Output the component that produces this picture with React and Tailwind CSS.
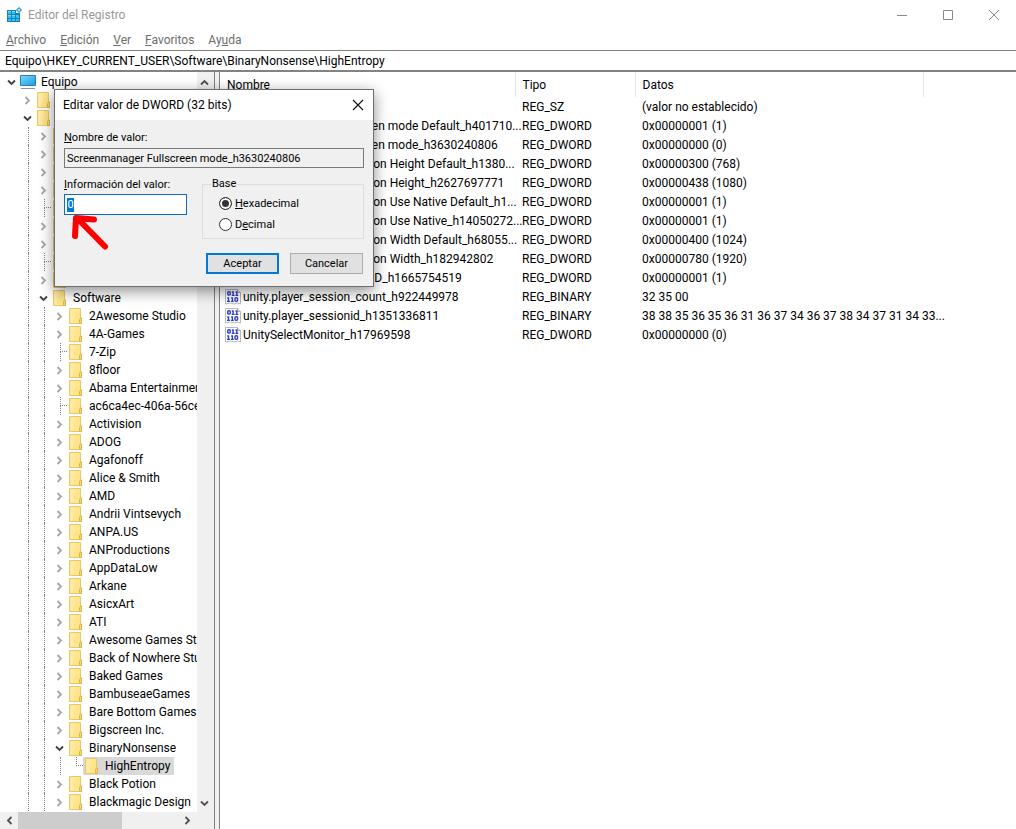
import { useState } from "react";

const uiFont = "font-['Roboto','Open_Sans',sans-serif]";

const menus = [
  ["", "A", "rchivo"],
  ["", "E", "dición"],
  ["", "V", "er"],
  ["", "F", "avoritos"],
  ["Ay", "u", "da"],
];

// Keys between HKEY_CURRENT_USER and Software
const userKeys = [
  { name: "AppEvents" },
  { name: "Console" },
  { name: "Control Panel" },
  { name: "EUDC" },
  { name: "Environment", leaf: true },
  { name: "Keyboard Layout" },
  { name: "Microsoft" },
  { name: "Network", leaf: true },
  { name: "Printers" },
];

const softwareKeys = [
  { name: "2Awesome Studio" },
  { name: "4A-Games" },
  { name: "7-Zip", leaf: true },
  { name: "8floor" },
  { name: "Abama Entertainment" },
  { name: "ac6ca4ec-406a-56ce", leaf: true },
  { name: "Activision" },
  { name: "ADOG" },
  { name: "Agafonoff" },
  { name: "Alice & Smith" },
  { name: "AMD" },
  { name: "Andrii Vintsevych" },
  { name: "ANPA.US" },
  { name: "ANProductions" },
  { name: "AppDataLow" },
  { name: "Arkane" },
  { name: "AsicxArt" },
  { name: "ATI" },
  { name: "Awesome Games Studio" },
  { name: "Back of Nowhere Studio" },
  { name: "Baked Games" },
  { name: "BambuseaeGames" },
  { name: "Bare Bottom Games" },
  { name: "Bigscreen Inc." },
  { name: "BinaryNonsense", open: true },
];

const tree = [
  { name: "Equipo", level: 0, open: true },
  { name: "HKEY_CLASSES_ROOT", level: 1 },
  { name: "HKEY_CURRENT_USER", level: 1, open: true },
  ...userKeys.map((k) => ({ ...k, level: 2 })),
  { name: "Software", level: 2, open: true },
  ...softwareKeys.map((k) => ({ ...k, level: 3 })),
  { name: "HighEntropy", level: 4, leaf: true, last: true },
  { name: "Black Potion", level: 3 },
  { name: "Blackmagic Design", level: 3 },
];

const values = [
  ["(Predeterminado)", "REG_SZ", "(valor no establecido)"],
  ["Screenmanager Fullscreen mode Default_h401710...", "REG_DWORD", "0x00000001 (1)"],
  ["Screenmanager Fullscreen mode_h3630240806", "REG_DWORD", "0x00000000 (0)"],
  ["Screenmanager Resolution Height Default_h1380...", "REG_DWORD", "0x00000300 (768)"],
  ["Screenmanager Resolution Height_h2627697771", "REG_DWORD", "0x00000438 (1080)"],
  ["Screenmanager Resolution Use Native Default_h1...", "REG_DWORD", "0x00000001 (1)"],
  ["Screenmanager Resolution Use Native_h14050272...", "REG_DWORD", "0x00000001 (1)"],
  ["Screenmanager Resolution Width Default_h68055...", "REG_DWORD", "0x00000400 (1024)"],
  ["Screenmanager Resolution Width_h182942802", "REG_DWORD", "0x00000780 (1920)"],
  ["Screenmanager Stereo 3D_h1665754519", "REG_DWORD", "0x00000001 (1)"],
  ["unity.player_session_count_h922449978", "REG_BINARY", "32 35 00"],
  ["unity.player_sessionid_h1351336811", "REG_BINARY", "38 38 35 36 35 36 31 36 37 34 36 37 38 34 37 31 34 33..."],
  ["UnitySelectMonitor_h17969598", "REG_DWORD", "0x00000000 (0)"],
];

const chevrons = {
  up: "M1 6.5 L4.5 3 L8 6.5",
  down: "M1 2.5 L4.5 6 L8 2.5",
  left: "M6.5 1 L3 4.5 L6.5 8",
  right: "M2.5 1 L6 4.5 L2.5 8",
};

const Chevron = ({ dir, className }) => (
  <svg viewBox="0 0 9 9" className={`w-[9px] h-[9px] shrink-0 ${className}`} fill="none" stroke="currentColor" strokeWidth="1.8">
    <path d={chevrons[dir]} />
  </svg>
);

const RegistryIcon = () => (
  <svg viewBox="0 0 16 16" className="w-4 h-4 shrink-0">
    <path d="M1 3h9v3h4v9H1z" fill="#1583b8" />
    <path d="M2 4h3v3H2zM6 4h3v3H6zM2 8h3v3H2zM6 8h3v3H6zM10 8h3v3h-3zM2 12h3v2H2zM6 12h3v2H6zM10 12h3v2h-3z" fill="#35c0f0" />
    <path d="M2 4h3v1H2zM6 4h3v1H6zM2 8h3v1H2zM6 8h3v1H6z" fill="#7adcf9" />
    <path d="M13 0.5 L15.5 3 L13 5.5 L10.5 3z" fill="#5fd0f5" stroke="#17759f" strokeWidth="0.9" />
    <path d="M12.3 3h1.4" stroke="#fff" />
  </svg>
);

const ComputerIcon = () => (
  <svg viewBox="0 0 16 16" className="w-4 h-4 shrink-0">
    <defs>
      <linearGradient id="screen" x1="0" y1="0" x2="1" y2="1">
        <stop offset="0" stopColor="#7fdcff" />
        <stop offset="1" stopColor="#149be0" />
      </linearGradient>
    </defs>
    <path d="M0.5 1.5h15v10H0.5z" fill="url(#screen)" stroke="#2f7fae" />
    <path d="M1 14.5h14" stroke="#7d99aa" />
  </svg>
);

const FolderIcon = () => (
  <svg viewBox="-1 0 16 16" className="w-4 h-4 shrink-0">
    <path d="M0.5 0.5h11v10h1v5h-12z" fill="#ffe48a" stroke="#e8c766" />
    <path d="M1 1h6L4 15H1z" fill="#ffeeb0" opacity="0.6" />
    <path d="M10.500 15.500v-4l1-1.500h1v5.500z" fill="#f7d673" stroke="#dfb54a" />
  </svg>
);

const BinaryIcon = () => (
  <svg viewBox="0 0 16 16" className="w-4 h-4 shrink-0">
    <path d="M0.5 0.5h12l3 3v11.500l-3-1-3 1-4-1-5 1z" fill="#fff" stroke="#b3b7be" />
    <path d="M12.5 0.5v3h3" fill="#e4e6ea" stroke="#a9adb5" />
    <g fill="none" stroke="#2f3fc4" strokeWidth="1.4">
      <rect x="2.700" y="2.700" width="2.600" height="3.300" rx="1" />
      <path d="M6.800 3h1.300v3.500M6.700 6.400h2.900M10.500 3h1.300v3.500M10.400 6.400h2.900" />
      <path d="M2.200 9h1.300v3.500M2 12.400h3M6.100 9h1.300v3.500M6 12.400h2.800" />
      <rect x="10" y="8.800" width="2.600" height="3.500" rx="1" />
    </g>
  </svg>
);

const Guide = () => <span className="w-[7px] ml-[9px] h-full shrink-0 border-l border-dotted border-[#808080]"></span>;

const Expander = ({ item }) => {
  if (item.leaf) {
    return (
      <span className="w-[7px] ml-[9px] h-full shrink-0 flex flex-col">
        <span className="h-[9px] border-l border-b border-dotted border-[#808080]"></span>
        {!item.last && <span className="flex-1 border-l border-dotted border-[#808080]"></span>}
      </span>
    );
  }
  return (
    <button type="button" aria-label={`${item.open ? "Contraer" : "Expandir"} ${item.name}`} className="w-4 h-full shrink-0 flex items-center justify-center">
      <Chevron dir={item.open ? "down" : "right"} className={item.open ? "text-[#404040]" : "text-[#a6a6a6]"} />
    </button>
  );
};

const TreeRow = ({ item }) => {
  const selected = item.name === "HighEntropy";
  return (
    <li className="flex items-center h-[18px] pl-[3px] whitespace-nowrap">
      {item.level > 0 && <span className="w-4 shrink-0"></span>}
      {Array.from({ length: Math.max(item.level - 1, 0) }, (_, i) => <Guide key={i} />)}
      <Expander item={item} />
      <span className={`flex items-center h-full pl-px pr-1 gap-[5px] ${selected ? "bg-[#d9d9d9]" : ""}`}>
        {item.level === 0 ? <ComputerIcon /> : <FolderIcon />}
        {item.name}
      </span>
    </li>
  );
};

const KeyTree = () => (
  <aside className="w-[215px] shrink-0 flex flex-col border-r border-[#828282]">
    <div className="flex flex-1">
      <ul className="flex-1 min-w-0 overflow-hidden pt-px">
        {tree.map((item) => <TreeRow key={item.name} item={item} />)}
      </ul>
      <div className="w-[17px] pr-[2px] bg-[#f0f0f0] flex flex-col justify-between">
        <button type="button" aria-label="Subir" className="h-5 flex items-center justify-center text-[#505050]"><Chevron dir="up" /></button>
        <button type="button" aria-label="Bajar" className="h-[17px] flex items-center justify-center text-[#505050]"><Chevron dir="down" /></button>
      </div>
    </div>
    <div className="h-[17px] bg-[#f0f0f0] flex pr-[18px]">
      <button type="button" aria-label="Izquierda" className="w-[18px] flex items-center justify-center text-[#505050]"><Chevron dir="left" /></button>
      <div className="w-[104px] bg-[#cdcdcd]"></div>
      <button type="button" aria-label="Derecha" className="w-[18px] ml-auto flex items-center justify-center text-[#505050]"><Chevron dir="right" /></button>
    </div>
  </aside>
);

const ValueTable = () => (
  <main className="flex-1 min-w-0 border-l border-[#828282]">
    <table className="w-full table-fixed text-left whitespace-nowrap">
      <colgroup>
        <col className="w-[295px]" />
        <col className="w-[120px]" />
        <col className="w-[288px]" />
        <col />
      </colgroup>
      <thead>
        <tr className="h-[25px]">
          <th className="font-normal p-0 pl-[7px] border-r border-[#e5e5e5]">Nombre</th>
          <th className="font-normal p-0 pl-[7px] border-r border-[#e5e5e5]">Tipo</th>
          <th className="font-normal p-0 pl-[7px] border-r border-[#e5e5e5]">Datos</th>
          <td></td>
        </tr>
      </thead>
      <tbody>
        {values.map(([name, type, data]) => (
          <tr key={name} className="h-[19px]">
            <td className="p-0 pl-[5px]">
              <span className="flex items-center gap-[2px]">
                <BinaryIcon />
                {name}
              </span>
            </td>
            <td className="p-0 pl-[7px]">{type}</td>
            <td className="p-0 pl-[7px]">{data}</td>
            <td></td>
          </tr>
        ))}
      </tbody>
    </table>
  </main>
);

const BaseOption = ({ value, base, setBase, children }) => (
  <label className="flex items-center gap-[3px] h-[21px]">
    <input
      type="radio"
      name="base"
      value={value}
      checked={base === value}
      onChange={() => setBase(value)}
      className="appearance-none w-[13px] h-[13px] rounded-full border border-[#333333] bg-white checked:bg-[#333333] checked:shadow-[inset_0_0_0_2px_#ffffff]"
    />
    <span>{children}</span>
  </label>
);

const EditDialog = () => {
  const [data, setData] = useState("0");
  const [base, setBase] = useState("hex");

  return (
    <form
      role="dialog"
      aria-label="Editar valor de DWORD (32 bits)"
      onSubmit={(e) => e.preventDefault()}
      className="absolute left-[54px] top-[89px] w-[320px] bg-[#f0f0f0] border border-[#6e6e6e] shadow-[0_4px_14px_rgba(0,0,0,0.45)] text-[11px] leading-[14px] text-black"
    >
      <div className="flex items-center justify-between h-[30px] bg-white pl-2 pr-[9px] text-[12px]">
        <h2>Editar valor de DWORD (32 bits)</h2>
        <button type="button" aria-label="Cerrar">
          <svg viewBox="0 0 12 12" className="w-3 h-3" stroke="#111" strokeWidth="1.1"><path d="M1 1l10 10M11 1L1 11" /></svg>
        </button>
      </div>
      <div className="px-[9px] pt-[11px] pb-3">
        <label htmlFor="value-name" className="block"><u>N</u>ombre de valor:</label>
        <input id="value-name" readOnly value="Screenmanager Fullscreen mode_h3630240806" className="block w-full h-5 mt-[3px] px-[2px] bg-[#f0f0f0] border border-[#7a7a7a]" />
        <div className="flex justify-between mt-[9px]">
          <div className="w-[123px]">
            <label htmlFor="value-data" className="block pt-px whitespace-nowrap"><u>I</u>nformación del valor:</label>
            <div className="relative mt-[2px]">
              <div className="flex items-center h-[21px] px-[2px] bg-white border border-[#0f6cbd]">
                <input id="value-data" value={data} onChange={(e) => setData(e.target.value)} className="w-[7px] h-[14px] bg-[#0078d7] text-white text-center outline-none" />
              </div>
              <svg viewBox="0 0 42 42" className="absolute left-[5px] top-[17px] w-[42px] h-[42px]" fill="none" stroke="#fe0000" strokeWidth="6" strokeLinecap="round" strokeLinejoin="round">
                <path d="M9 8 L36 35.500 M25 8.500 L7 7 L6 25" />
              </svg>
            </div>
          </div>
          <fieldset className="w-[162px] h-[62px] border border-[#dcdcdc] pl-4 pt-[2px]">
            <legend className="-ml-2 px-px">Base</legend>
            <BaseOption value="hex" base={base} setBase={setBase}><u>H</u>exadecimal</BaseOption>
            <BaseOption value="dec" base={base} setBase={setBase}>D<u>e</u>cimal</BaseOption>
          </fieldset>
        </div>
        <div className="flex justify-end gap-[11px] mt-[14px] pr-px">
          <button type="submit" className="w-[73px] h-[21px] bg-[#e1e1e1] border-2 border-[#0078d7]">Aceptar</button>
          <button type="button" className="w-[73px] h-[21px] bg-[#e1e1e1] border border-[#adadad]">Cancelar</button>
        </div>
      </div>
    </form>
  );
};

const App = () => (
  <div className={`relative min-h-screen flex flex-col bg-white text-black text-[12px] leading-[18px] ${uiFont}`}>
    <header className="flex items-center h-[30px] pl-[6px] pr-4 text-[#999999]">
      <RegistryIcon />
      <h1 className="ml-[6px] flex-1">Editor del Registro</h1>
      <div className="flex gap-[34px]">
        <button type="button" aria-label="Minimizar"><svg viewBox="0 0 12 12" className="w-3 h-3" stroke="#8a8a8a"><path d="M1 6.5h10" /></svg></button>
        <button type="button" aria-label="Maximizar"><svg viewBox="0 0 12 12" className="w-3 h-3" fill="none" stroke="#8a8a8a"><path d="M1.5 1.5h9v9h-9z" /></svg></button>
        <button type="button" aria-label="Cerrar ventana"><svg viewBox="0 0 12 12" className="w-3 h-3" stroke="#8a8a8a"><path d="M1 1l10 10M11 1L1 11" /></svg></button>
      </div>
    </header>

    <nav className="flex items-center h-5 pl-[6px] gap-[14px] text-[#6d6d6d]">
      {menus.map(([before, key, after]) => (
        <button key={after} type="button">{before}<u>{key}</u>{after}</button>
      ))}
    </nav>

    <input aria-label="Ruta" readOnly value="Equipo\HKEY_CURRENT_USER\Software\BinaryNonsense\HighEntropy" className="block w-full h-[22px] px-[5px] border-t border-b-2 border-[#828282]" />

    <div className="flex flex-1 bg-[#f0f0f0] gap-1">
      <div className="flex bg-white"><KeyTree /></div>
      <div className="flex flex-1 min-w-0 bg-white"><ValueTable /></div>
    </div>

    <EditDialog />
  </div>
);

export default App;
